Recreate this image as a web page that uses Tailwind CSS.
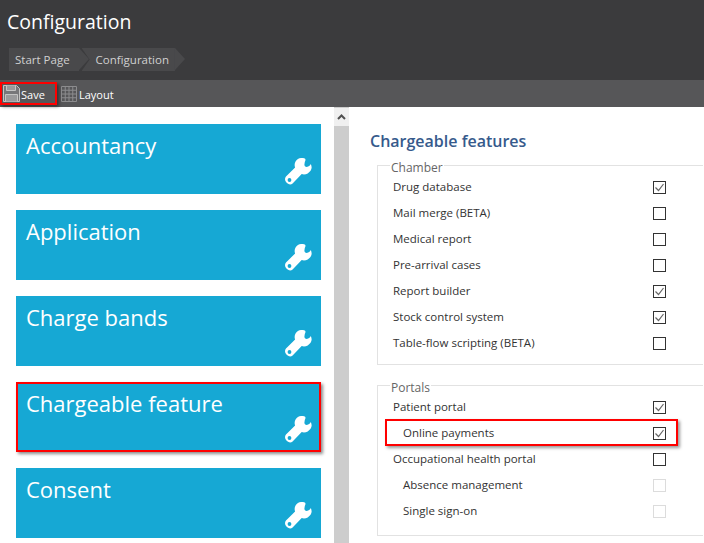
<!DOCTYPE html>
<html lang="en">
<head>
<meta charset="UTF-8" />
<title>Configuration</title>
<script src="https://cdn.jsdelivr.net/npm/@tailwindcss/browser@4"></script>
</head>
<body class="relative w-[704px] h-[543px] overflow-hidden bg-white font-['Open_Sans',sans-serif]">

<!-- Header -->
<header class="h-[80px] bg-[#3b3b3d] pl-[7px] pt-[8px]">
  <h1 class="text-[19.5px] leading-[28px] text-white">Configuration</h1>
  <nav class="flex mt-[12px] ml-[2px] text-[11.5px] text-[#d0d0d0]">
    <span class="h-[23px] bg-[#49494b] pl-[6px] pr-[9px] leading-[23px]">Start Page</span>
    <span class="w-0 h-0 border-y-[11.5px] border-y-transparent border-l-[10px] border-l-[#49494b]"></span>
    <span class="h-[23px] bg-[#49494b] pl-[6px] pr-[6px] ml-[-7px] leading-[23px] [clip-path:polygon(0_0,100%_0,100%_100%,0_100%,8px_50%)]"><span class="pl-[8px]">Configuration</span></span>
    <span class="w-0 h-0 border-y-[11.5px] border-y-transparent border-l-[10px] border-l-[#49494b]"></span>
  </nav>
</header>

<!-- Toolbar -->
<div class="h-[27px] bg-[#565658] flex items-center text-[11px] font-medium text-white">
  <div class="flex items-center ml-[3px] w-[55px] gap-[1px]">
    <svg class="w-[17px] h-[17px]" viewBox="0 0 17 17" fill="none" stroke="#c4c4c4"><path d="M.5.5h13l3 3v13H.5z" fill="#77777a"/><path d="M3.5.5v5h9v-5M2.5 16.5v-7h12v7" fill="#9a9a9c"/></svg>
    <span class="pt-[3px]">Save</span>
  </div>
  <div class="flex items-center ml-[3px] gap-[2px]">
    <svg class="w-[16px] h-[16px]" viewBox="0 0 16 16" fill="none" stroke="#8c8c8e"><path d="M.5.5h15v15H.5zM.5 4.25h15M.5 8h15M.5 11.75h15M4.25.5v15M8 .5v15M11.75.5v15"/></svg>
    <span class="pt-[3px]">Layout</span>
  </div>
</div>

<main class="flex h-[436px] overflow-hidden">
  <!-- Tiles -->
  <section class="w-[334px] shrink-0 pl-[16px] pt-[17px] flex flex-col gap-[16px]">
    <div class="relative shrink-0 h-[70px] w-[305px] bg-[#16a8d4] text-white text-[22px] leading-[30px] pl-[10px] pt-[6px]">Accountancy
      <svg class="absolute right-[9px] bottom-[9px] w-[27px] h-[27px]" viewBox="0 0 27 27"><path fill="#fff" d="M26.500 8.500c-.1-.9-.3-1.700-.7-2.400-.6 1.600-2.300 2.800-4 2.800-1.900 0-2.700-1.400-2.300-3 .2-1.100.3-2.300.9-3.300V.9c-.7-.4-1.500-.7-2.600-.9-3-.3-5.600.9-7.100 3.200-1.200 1.900-1.400 4.200-.6 6.300L1 18.600c-1.400 1.400-1.300 4 .2 5.600l1.100 1.100c1.500 1.500 3.900 1.500 5.300.1l9.100-9.300c2 .7 4.200.4 6-.7 2.900-1.700 4.400-4.500 3.800-6.900zM4.500 23.900a1.900 1.900 0 1 1 0-3.800 1.900 1.900 0 0 1 0 3.800z"/></svg>
    </div>
    <div class="relative shrink-0 h-[70px] w-[305px] bg-[#16a8d4] text-white text-[22px] leading-[30px] pl-[10px] pt-[6px]">Application
      <svg class="absolute right-[9px] bottom-[9px] w-[27px] h-[27px]" viewBox="0 0 27 27"><path fill="#fff" d="M26.500 8.500c-.1-.9-.3-1.700-.7-2.400-.6 1.600-2.300 2.800-4 2.800-1.900 0-2.700-1.400-2.300-3 .2-1.100.3-2.300.9-3.300V.9c-.7-.4-1.500-.7-2.600-.9-3-.3-5.600.9-7.100 3.200-1.200 1.900-1.400 4.200-.6 6.300L1 18.600c-1.400 1.400-1.300 4 .2 5.600l1.100 1.100c1.500 1.500 3.900 1.500 5.300.1l9.100-9.300c2 .7 4.200.4 6-.7 2.900-1.700 4.400-4.500 3.800-6.900zM4.500 23.900a1.900 1.900 0 1 1 0-3.800 1.900 1.900 0 0 1 0 3.800z"/></svg>
    </div>
    <div class="relative shrink-0 h-[70px] w-[305px] bg-[#16a8d4] text-white text-[22px] leading-[30px] pl-[10px] pt-[6px]">Charge bands
      <svg class="absolute right-[9px] bottom-[9px] w-[27px] h-[27px]" viewBox="0 0 27 27"><path fill="#fff" d="M26.500 8.500c-.1-.9-.3-1.700-.7-2.400-.6 1.600-2.300 2.800-4 2.800-1.900 0-2.700-1.400-2.300-3 .2-1.100.3-2.300.9-3.300V.9c-.7-.4-1.500-.7-2.600-.9-3-.3-5.600.9-7.100 3.200-1.200 1.900-1.400 4.200-.6 6.300L1 18.600c-1.400 1.400-1.300 4 .2 5.600l1.100 1.100c1.500 1.500 3.900 1.500 5.300.1l9.100-9.300c2 .7 4.200.4 6-.7 2.900-1.700 4.400-4.500 3.800-6.900zM4.500 23.900a1.900 1.900 0 1 1 0-3.800 1.900 1.900 0 0 1 0 3.800z"/></svg>
    </div>
    <div class="relative shrink-0 h-[70px] w-[305px] bg-[#16a8d4] text-white text-[22px] leading-[30px] pl-[10px] pt-[6px] outline-2 -outline-offset-2 outline-[#ff0000] shadow-[2px_2px_3px_rgba(0,0,0,0.45)]">Chargeable feature
      <svg class="absolute right-[9px] bottom-[9px] w-[27px] h-[27px]" viewBox="0 0 27 27"><path fill="#fff" d="M26.500 8.500c-.1-.9-.3-1.700-.7-2.400-.6 1.600-2.300 2.800-4 2.800-1.900 0-2.700-1.400-2.300-3 .2-1.100.3-2.300.9-3.300V.9c-.7-.4-1.500-.7-2.600-.9-3-.3-5.600.9-7.100 3.200-1.200 1.900-1.400 4.200-.6 6.300L1 18.600c-1.400 1.400-1.300 4 .2 5.600l1.100 1.100c1.500 1.500 3.900 1.500 5.300.1l9.100-9.300c2 .7 4.200.4 6-.7 2.900-1.700 4.400-4.500 3.800-6.900zM4.500 23.900a1.900 1.900 0 1 1 0-3.800 1.900 1.900 0 0 1 0 3.800z"/></svg>
    </div>
    <div class="relative shrink-0 h-[70px] w-[305px] bg-[#16a8d4] text-white text-[22px] leading-[30px] pl-[10px] pt-[6px]">Consent
      <svg class="absolute right-[9px] bottom-[9px] w-[27px] h-[27px]" viewBox="0 0 27 27"><path fill="#fff" d="M26.500 8.500c-.1-.9-.3-1.700-.7-2.400-.6 1.600-2.300 2.800-4 2.800-1.900 0-2.700-1.400-2.300-3 .2-1.100.3-2.300.9-3.300V.9c-.7-.4-1.500-.7-2.600-.9-3-.3-5.600.9-7.100 3.200-1.200 1.900-1.400 4.200-.6 6.300L1 18.600c-1.400 1.400-1.300 4 .2 5.600l1.100 1.100c1.500 1.500 3.900 1.500 5.300.1l9.100-9.300c2 .7 4.200.4 6-.7 2.900-1.700 4.400-4.500 3.800-6.900zM4.500 23.900a1.900 1.900 0 1 1 0-3.800 1.900 1.900 0 0 1 0 3.800z"/></svg>
    </div>
  </section>

  <!-- Scrollbar -->
  <div class="w-[15px] shrink-0 bg-[#cdcdcd]">
    <div class="h-[18px] mt-[1px] bg-[#f0f0f0] flex items-center justify-center">
      <svg class="w-[9px] h-[6px]" viewBox="0 0 9 6" fill="none" stroke="#505050" stroke-width="2"><path d="M1 5l3.500-3.500L8 5"/></svg>
    </div>
  </div>

  <!-- Features -->
  <section class="w-[355px] shrink-0 pl-[21px] pt-[23px] text-[11.5px] text-[#333]">
    <h2 class="text-[16px] leading-[22px] font-semibold text-[#365a8c]">Chargeable features</h2>

    <div class="relative ml-[7px] mt-[13px] h-[200px] w-[326px] border border-r-0 border-[#e2e2e2] pt-[8px]">
      <span class="absolute left-[12px] top-[-5px] bg-white px-[1px] text-[12px] leading-[14px] text-[#666]">Chamber</span>
      <div class="flex items-center justify-between h-[26px] pl-[15px] w-[288px]"><span>Drug database</span><span class="w-[13px] h-[13px] border border-[#333] flex items-center justify-center"><svg class="w-[11px] h-[11px]" viewBox="0 0 11 11" fill="none" stroke="#666" stroke-width="1.200"><path d="M1.500 5.500l3 3 5-6.500"/></svg></span></div>
      <div class="flex items-center justify-between h-[26px] pl-[15px] w-[288px]"><span>Mail merge (BETA)</span><span class="w-[13px] h-[13px] border border-[#333]"></span></div>
      <div class="flex items-center justify-between h-[26px] pl-[15px] w-[288px]"><span>Medical report</span><span class="w-[13px] h-[13px] border border-[#333]"></span></div>
      <div class="flex items-center justify-between h-[26px] pl-[15px] w-[288px]"><span>Pre-arrival cases</span><span class="w-[13px] h-[13px] border border-[#333]"></span></div>
      <div class="flex items-center justify-between h-[26px] pl-[15px] w-[288px]"><span>Report builder</span><span class="w-[13px] h-[13px] border border-[#333] flex items-center justify-center"><svg class="w-[11px] h-[11px]" viewBox="0 0 11 11" fill="none" stroke="#666" stroke-width="1.200"><path d="M1.500 5.500l3 3 5-6.500"/></svg></span></div>
      <div class="flex items-center justify-between h-[26px] pl-[15px] w-[288px]"><span>Stock control system</span><span class="w-[13px] h-[13px] border border-[#333] flex items-center justify-center"><svg class="w-[11px] h-[11px]" viewBox="0 0 11 11" fill="none" stroke="#666" stroke-width="1.200"><path d="M1.500 5.500l3 3 5-6.500"/></svg></span></div>
      <div class="flex items-center justify-between h-[26px] pl-[15px] w-[288px]"><span>Table-flow scripting (BETA)</span><span class="w-[13px] h-[13px] border border-[#333]"></span></div>
    </div>

    <div class="relative ml-[7px] mt-[20px] h-[151px] w-[326px] border border-r-0 border-[#e2e2e2] pt-[8px]">
      <span class="absolute left-[12px] top-[-5px] bg-white px-[1px] text-[12px] leading-[14px] text-[#666]">Portals</span>
      <div class="flex items-center justify-between h-[26px] pl-[15px] w-[288px]"><span>Patient portal</span><span class="w-[13px] h-[13px] border border-[#333] flex items-center justify-center"><svg class="w-[11px] h-[11px]" viewBox="0 0 11 11" fill="none" stroke="#666" stroke-width="1.200"><path d="M1.500 5.500l3 3 5-6.500"/></svg></span></div>
      <div class="relative flex items-center justify-between h-[26px] pl-[25px] w-[288px]"><span>Online payments</span><span class="w-[13px] h-[13px] border border-[#333] flex items-center justify-center"><svg class="w-[11px] h-[11px]" viewBox="0 0 11 11" fill="none" stroke="#666" stroke-width="1.200"><path d="M1.500 5.500l3 3 5-6.500"/></svg></span>
        <div class="absolute left-[7px] top-[-1px] w-[293px] h-[27px] border-2 border-[#ff0000] shadow-[2px_2px_3px_rgba(0,0,0,0.4)]"></div>
      </div>
      <div class="flex items-center justify-between h-[26px] pl-[15px] w-[288px]"><span>Occupational health portal</span><span class="w-[13px] h-[13px] border border-[#333]"></span></div>
      <div class="flex items-center justify-between h-[26px] pl-[25px] w-[288px]"><span>Absence management</span><span class="w-[13px] h-[13px] border border-[#dcdcdc]"></span></div>
      <div class="flex items-center justify-between h-[26px] pl-[25px] w-[288px]"><span>Single sign-on</span><span class="w-[13px] h-[13px] border border-[#dcdcdc]"></span></div>
    </div>
  </section>
</main>

<!-- Save highlight -->
<div class="absolute left-0 top-[82px] w-[57px] h-[23px] border-2 border-[#ff0000] shadow-[2px_2px_3px_rgba(0,0,0,0.4)]"></div>

</body>
</html>
